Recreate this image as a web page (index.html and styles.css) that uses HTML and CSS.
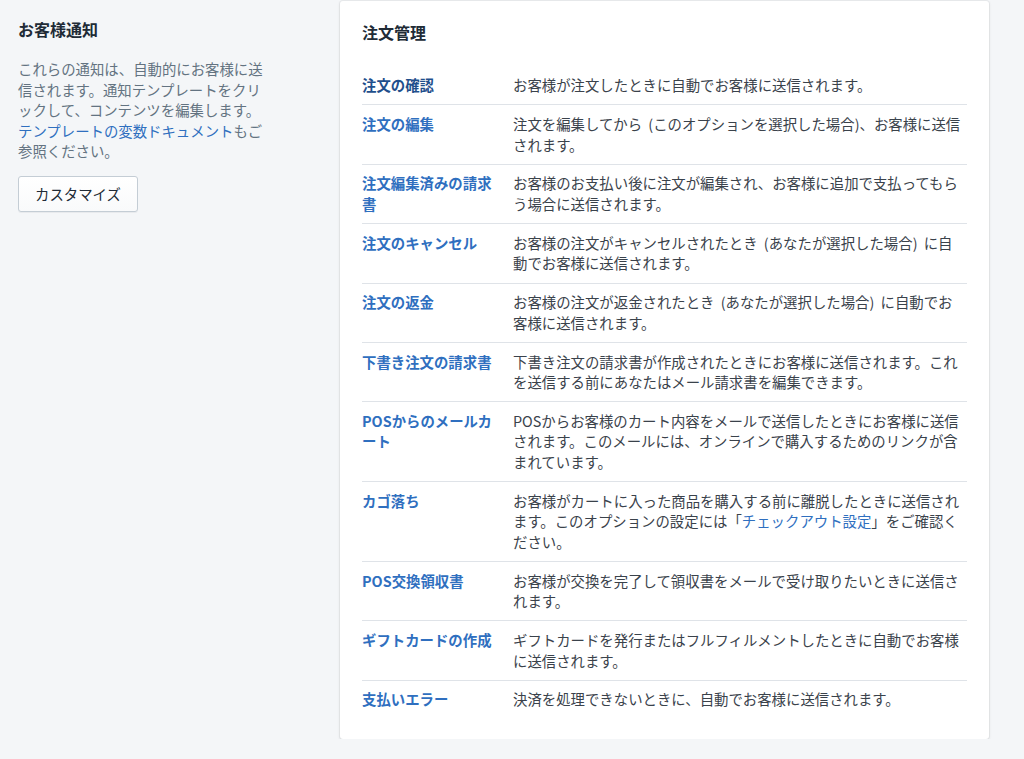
FILE: index.html
```html
<!DOCTYPE html>
<html lang="ja">
<head>
<meta charset="utf-8">
<title>お客様通知</title>
<link rel="stylesheet" href="styles.css">
</head>
<body>
<div class="page">
  <aside class="intro">
    <h2 class="intro-title">お客様通知</h2>
    <p class="intro-text">これらの通知は、自動的にお客様に送信されます。通知テンプレートをクリックして、コンテンツを編集します。<a class="link" href="#">テンプレートの変数ドキュメント</a>もご参照ください。</p>
    <button class="btn" type="button">カスタマイズ</button>
  </aside>
  <section class="card">
    <h3 class="card-title">注文管理</h3>
    <ul class="list">
      <li class="row"><a class="name name-active" href="#">注文の確認</a><span class="desc">お客様が注文したときに自動でお客様に送信されます。</span></li>
      <li class="row"><a class="name" href="#">注文の編集</a><span class="desc">注文を編集してから (このオプションを選択した場合)、お客様に送信されます。</span></li>
      <li class="row"><a class="name" href="#">注文編集済みの請求書</a><span class="desc">お客様のお支払い後に注文が編集され、お客様に追加で支払ってもらう場合に送信されます。</span></li>
      <li class="row"><a class="name" href="#">注文のキャンセル</a><span class="desc">お客様の注文がキャンセルされたとき (あなたが選択した場合) に自動でお客様に送信されます。</span></li>
      <li class="row"><a class="name" href="#">注文の返金</a><span class="desc">お客様の注文が返金されたとき (あなたが選択した場合) に自動でお客様に送信されます。</span></li>
      <li class="row"><a class="name" href="#">下書き注文の請求書</a><span class="desc">下書き注文の請求書が作成されたときにお客様に送信されます。これを送信する前にあなたはメール請求書を編集できます。</span></li>
      <li class="row"><a class="name" href="#">POSからのメールカート</a><span class="desc">POSからお客様のカート内容をメールで送信したときにお客様に送信されます。このメールには、オンラインで購入するためのリンクが含まれています。</span></li>
      <li class="row"><a class="name" href="#">カゴ落ち</a><span class="desc">お客様がカートに入った商品を購入する前に離脱したときに送信されます。このオプションの設定には「<a class="link" href="#">チェックアウト設定</a>」をご確認ください。</span></li>
      <li class="row"><a class="name" href="#">POS交換領収書</a><span class="desc">お客様が交換を完了して領収書をメールで受け取りたいときに送信されます。</span></li>
      <li class="row"><a class="name" href="#">ギフトカードの作成</a><span class="desc">ギフトカードを発行またはフルフィルメントしたときに自動でお客様に送信されます。</span></li>
      <li class="row"><a class="name" href="#">支払いエラー</a><span class="desc">決済を処理できないときに、自動でお客様に送信されます。</span></li>
    </ul>
  </section>
</div>
</body>
</html>
```

FILE: styles.css
```css
html, body {
  margin: 0;
  padding: 0;
  background: #f4f6f8;
}
body {
  font-family: "Noto Sans CJK JP", "Noto Sans", sans-serif;
  font-size: 14.4px;
  line-height: 20.5px;
  color: #212b36;
}
.page {
  display: grid;
  grid-template-columns: 250px 649px;
  column-gap: 72px;
  align-items: start;
  padding: 1px 0 0 18px;
}
.intro {
  padding-top: 16px;
}
.intro-title {
  margin: 0;
  font-size: 16px;
  line-height: 24px;
  font-weight: 700;
  color: #212b36;
}
.intro-text {
  margin: 18px 0 0;
  color: #637381;
}
.link {
  color: #2f6fbf;
  text-decoration: none;
}
.btn {
  display: block;
  box-sizing: border-box;
  margin-top: 14px;
  height: 36px;
  padding: 0 16px;
  font-family: inherit;
  font-size: 14.4px;
  color: #212b36;
  background: linear-gradient(#ffffff, #f9fafb);
  border: 1px solid #c4cdd5;
  border-radius: 3px;
  box-shadow: 0 1px 0 rgba(22, 29, 37, 0.05);
}
.card {
  background: #ffffff;
  border-radius: 3px;
  box-shadow: 0 0 0 1px rgba(63, 63, 68, 0.05), 0 1px 3px 0 rgba(63, 63, 68, 0.15);
  padding: 19px 22px 20px;
}
.card-title {
  margin: 0 0 22.5px;
  font-size: 16px;
  line-height: 24px;
  font-weight: 700;
  color: #212b36;
}
.list {
  list-style: none;
  margin: 0;
  padding: 0;
}
.row {
  display: grid;
  grid-template-columns: 135px 1fr;
  column-gap: 16px;
  padding: 8.7px 0;
  border-top: 1px solid #dfe3e8;
}
.row:first-child {
  border-top: 0;
}
.name {
  font-weight: 700;
  color: #2f6fbf;
  text-decoration: none;
}
.name-active {
  color: #1f4f8c;
}
.desc {
  color: #3a424b;
  word-spacing: 3px;
  padding-right: 5px;
}
```
